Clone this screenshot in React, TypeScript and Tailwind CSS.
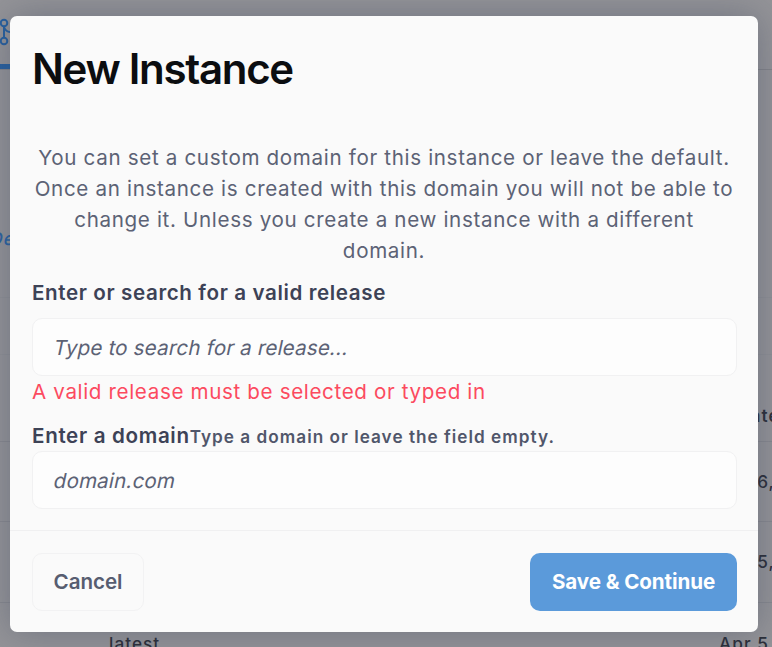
import React from 'react';

function TableRow({ name, date, height }: { name: string; date: string; height: string }) {
  return (
    <div className={`flex shrink-0 items-center justify-between border-t border-[#88898f] pl-[109px] ${height}`}>
      <span>{name}</span>
      <span className="w-[53px] whitespace-nowrap">{date}</span>
    </div>
  );
}

function PageBehind() {
  return (
    <div className="absolute inset-0 flex flex-col overflow-hidden bg-[#949498] text-[17.200px] font-medium tracking-[1.050px] text-[#2b2e38]">
      <header className="flex h-[70px] shrink-0 flex-col justify-between border-b border-[#838489] pt-[18px]">
        <svg className="-ml-2 h-7 w-7" viewBox="0 0 28 28" fill="none" stroke="#27609f" strokeWidth="2">
          <circle cx="12" cy="5" r="3.300" />
          <circle cx="12" cy="23" r="3.300" />
          <circle cx="24" cy="8" r="3.300" />
          <path d="M12 8.500v11M12 9q2 5 6 5q5 0 6-3" />
        </svg>
        <div className="h-[5px] w-6 bg-[#27609f]" />
      </header>
      <div className="h-[228px] shrink-0 border-b border-[#8f9095] pt-[154px]">
        <span className="-ml-[10px] inline-block -skew-x-12 text-[18px] leading-[30px] text-[#2a62a0]">Default</span>
      </div>
      <div className="h-[57px] shrink-0 border-b border-[#8f9095]" />
      <div className="flex h-[86px] shrink-0 justify-end pt-[46px]">
        <span className="w-[54px] whitespace-nowrap font-semibold leading-[30px]">Created</span>
      </div>
      <TableRow name="latest" date="Apr 6, 2022" height="h-[80px]" />
      <TableRow name="latest" date="Apr 5, 2022" height="h-[81px]" />
      <TableRow name="latest" date="Apr 5, 2022" height="h-[83px]" />
    </div>
  );
}

function Field({ text }: { text: string }) {
  return (
    <div className="mx-[22px] flex h-[58px] w-[705px] shrink-0 items-center rounded-[10px] border border-[#f1f1f2] bg-[#fdfdfd] px-[21px] pt-[2px] text-[20.600px] tracking-[0.160px] text-[#5c6275]" role="textbox">
      <span className="inline-block -skew-x-12 whitespace-nowrap">{text}</span>
    </div>
  );
}

export default function App() {
  return (
    <div className="relative h-[647px] w-[772px] overflow-hidden font-['Inter',sans-serif]">
      <PageBehind />
      <section className="relative ml-[10px] mt-4 flex h-[616px] w-[748px] flex-col rounded-[7px] bg-[#fafafa] shadow-[0_0_36px_rgba(55,65,90,0.4)]" role="dialog">
        <h1 className="ml-[22px] mt-[22px] h-[64px] whitespace-nowrap text-[42px] font-semibold leading-[62px] tracking-[-1.300px] text-[#0b0d10]">New Instance</h1>
        <p className="mx-[22px] mt-[40px] h-[124px] whitespace-nowrap text-center text-[20.600px] leading-[31px] tracking-[0.660px] text-[#5c6275]">
          You can set a custom domain for this instance or leave the default.<br />
          Once an instance is created with this domain you will not be able to<br />
          change it. Unless you create a new instance with a different<br />
          domain.
        </p>
        <label className="ml-[22px] mt-[11px] h-[31px] text-[20.600px] font-semibold leading-[31px] tracking-[0.610px] text-[#3d4256]">Enter or search for a valid release</label>
        <div className="mt-[10px] flex">
          <Field text="Type to search for a release..." />
        </div>
        <p className="ml-[22px] h-[31px] text-[20.600px] leading-[31px] tracking-[0.640px] text-[#fc4a5f]">A valid release must be selected or typed in</p>
        <label className="ml-[22px] mt-[13px] flex h-[31px] items-baseline text-[20.600px] font-semibold leading-[31px] tracking-[0.660px] text-[#3d4256]">
          Enter a domain<span className="text-[17.200px] tracking-[1.010px] text-[#50566a]">Type a domain or leave the field empty.</span>
        </label>
        <Field text="domain.com" />
        <footer className="mt-[21px] flex h-[102px] shrink-0 items-start justify-between border-t border-[#f0f0f1] pl-[22px] pr-[21px] pt-[22px]">
          <button className="h-[58px] w-[112px] rounded-[10px] border border-[#f2f2f3] text-[20.600px] font-semibold tracking-[-0.05px] text-[#575d70]">Cancel</button>
          <button className="h-[58px] w-[207px] rounded-[10px] bg-[#5b9ada] text-[20.600px] font-bold tracking-[-0.1px] text-white">Save &amp; Continue</button>
        </footer>
      </section>
    </div>
  );
}
